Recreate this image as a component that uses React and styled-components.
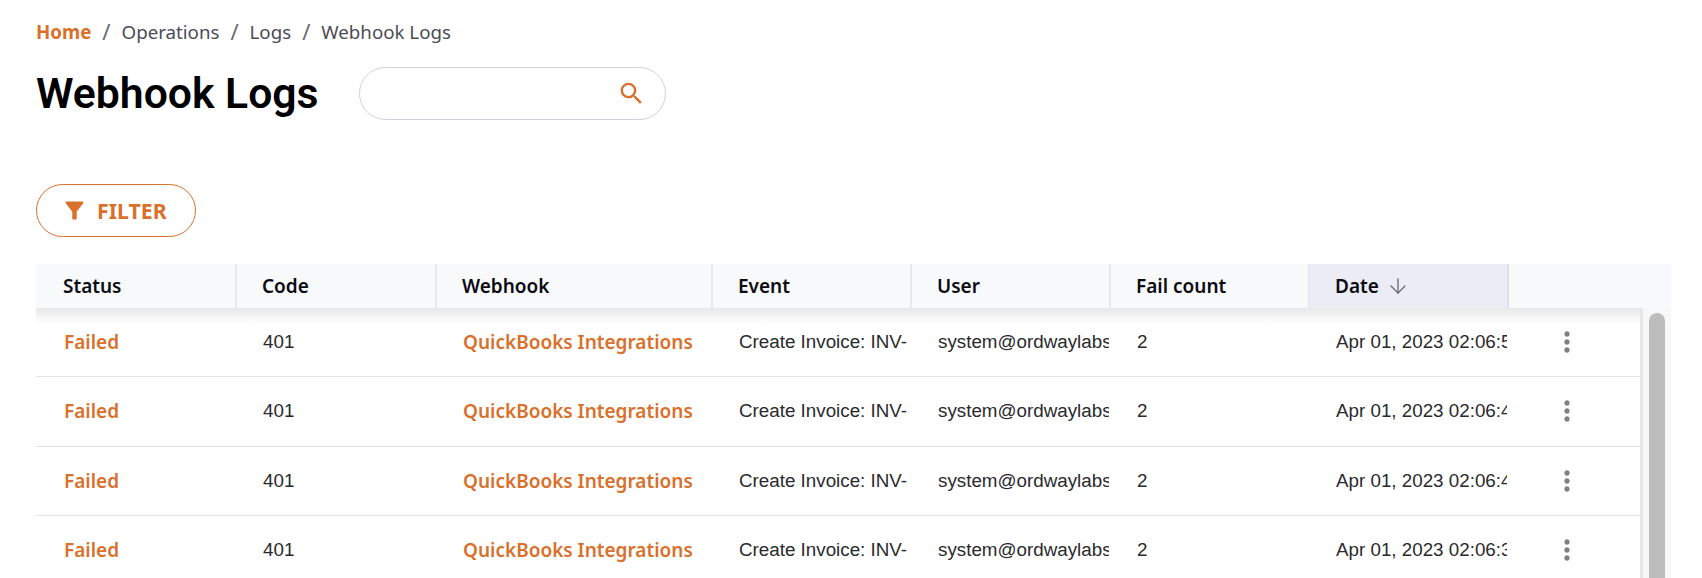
import styled, { createGlobalStyle } from "styled-components";
import { MdSearch, MdFilterAlt, MdMoreVert } from "react-icons/md";
import { ArrowDown } from "lucide-react";

const orange = "#d9702b";

const columns = [
  { label: "Status", width: 201 },
  { label: "Code", width: 200 },
  { label: "Webhook", width: 276 },
  { label: "Event", width: 199 },
  { label: "User", width: 199 },
  { label: "Fail count", width: 199 },
  { label: "Date", width: 199, sorted: true },
];

const logs = [
  "Apr 01, 2023 02:06:52 PM",
  "Apr 01, 2023 02:06:47 PM",
  "Apr 01, 2023 02:06:41 PM",
  "Apr 01, 2023 02:06:33 PM",
];

const Global = createGlobalStyle`
  html, body {
    margin: 0;
    height: 100%;
    background: #fff;
    overflow: hidden;
  }
  * {
    box-sizing: border-box;
  }
`;

const Page = styled.div`
  height: 578px;
  padding: 19px 31px 0 36px;
  overflow: hidden;
  font-family: "Noto Sans", sans-serif;
`;

const Breadcrumbs = styled.nav`
  display: flex;
  align-items: center;
  height: 24px;
  font-size: 18.7px;
  color: #4b4b55;
`;

const Crumb = styled.span`
  color: ${(p) => (p.$home ? orange : "#4b4b55")};
  font-weight: ${(p) => (p.$home ? 700 : 400)};
`;

const Slash = styled.span`
  margin: 0 11px;
  font-size: 22px;
  color: #6a6a72;
`;

const TitleRow = styled.div`
  display: flex;
  align-items: center;
  gap: 40px;
  margin-top: 24px;
`;

const Title = styled.h1`
  margin: 0;
  font-family: Roboto, sans-serif;
  font-size: 42.7px;
  font-weight: 600;
  line-height: 53px;
  color: #000;
`;

const Search = styled.div`
  display: flex;
  align-items: center;
  justify-content: flex-end;
  width: 307px;
  height: 53px;
  padding-right: 19px;
  border: 1px solid #cfd0da;
  border-radius: 27px;
  color: ${orange};
  svg {
    font-size: 29px;
  }
`;

const FilterButton = styled.button`
  display: flex;
  align-items: center;
  gap: 9px;
  width: 160px;
  height: 53px;
  margin-top: 64px;
  padding: 0 0 0 24px;
  border: 1px solid ${orange};
  border-radius: 27px;
  background: #fff;
  color: ${orange};
  font-family: inherit;
  font-size: 21.3px;
  font-weight: 700;
  svg {
    font-size: 27px;
  }
`;

const Table = styled.div`
  margin-top: 27px;
`;

const HeaderRow = styled.div`
  display: flex;
  height: 44px;
  background: #f8f9fb;
`;

const HeaderCell = styled.div`
  display: flex;
  align-items: center;
  gap: 7px;
  width: ${(p) => p.$width}px;
  padding-left: 25px;
  font-size: 19px;
  font-weight: 600;
  color: #0b0b12;
  background: ${(p) => (p.$sorted ? "#ebecf4" : "#f8f9fb")};
  border-right: 2px solid ${(p) => (p.$sorted ? "#dfe0e9" : "#e7e8ee")};
  &:first-child {
    padding-left: 27px;
  }
  svg {
    color: #66666e;
  }
`;

const Body = styled.div`
  display: flex;
  height: 270px;
`;

const Rows = styled.div`
  position: relative;
  flex: 1;
  &::before {
    content: "";
    position: absolute;
    top: 0;
    left: 0;
    right: 0;
    height: 15px;
    background: linear-gradient(rgba(60, 60, 70, 0.12), rgba(60, 60, 70, 0));
  }
`;

const Row = styled.div`
  display: flex;
  align-items: center;
  height: 69.3px;
  border-bottom: 1px solid #e2e2e6;
`;

const Cell = styled.div`
  flex: none;
  width: ${(p) => p.$width}px;
  padding: 0 2px 0 26px;
  overflow: hidden;
  white-space: nowrap;
  font-family: "Liberation Sans", sans-serif;
  font-size: 18.8px;
  color: #2a2a2e;
  &:first-child {
    padding-left: 28px;
  }
`;

const LinkCell = styled(Cell)`
  font-family: "Noto Sans", sans-serif;
  font-weight: 600;
  font-size: 19px;
  color: ${orange};
`;

const ClipText = styled.span`
  display: block;
  overflow: hidden;
`;

const Actions = styled.div`
  display: flex;
  justify-content: center;
  width: 116px;
  color: #808084;
  svg {
    font-size: 32px;
  }
`;

const ScrollTrack = styled.div`
  width: 31px;
  padding: 5px 6px 0 6px;
  border-left: 3px solid #e6e6e8;
  background: #f8f8f8;
`;

const ScrollThumb = styled.div`
  height: 100%;
  border-radius: 8px 8px 0 0;
  background: #bdbdbd;
`;

export default function App() {
  return (
    <Page>
      <Global />
      <Breadcrumbs>
        <Crumb $home>Home</Crumb>
        <Slash>/</Slash>
        <Crumb>Operations</Crumb>
        <Slash>/</Slash>
        <Crumb>Logs</Crumb>
        <Slash>/</Slash>
        <Crumb>Webhook Logs</Crumb>
      </Breadcrumbs>
      <TitleRow>
        <Title>Webhook Logs</Title>
        <Search>
          <MdSearch />
        </Search>
      </TitleRow>
      <FilterButton>
        <MdFilterAlt />
        FILTER
      </FilterButton>
      <Table>
        <HeaderRow>
          {columns.map((col) => (
            <HeaderCell key={col.label} $width={col.width} $sorted={col.sorted}>
              {col.label}
              {col.sorted && <ArrowDown size={24} strokeWidth={1.3} />}
            </HeaderCell>
          ))}
        </HeaderRow>
        <Body>
          <Rows>
            {logs.map((date) => (
              <Row key={date}>
                <LinkCell $width={columns[0].width}>Failed</LinkCell>
                <Cell $width={columns[1].width}>401</Cell>
                <LinkCell $width={columns[2].width}>QuickBooks Integrations</LinkCell>
                <Cell $width={columns[3].width}>Create Invoice: INV-</Cell>
                <Cell $width={columns[4].width}>
                  <ClipText>system@ordwaylabs.com</ClipText>
                </Cell>
                <Cell $width={columns[5].width}>2</Cell>
                <Cell $width={columns[6].width}>
                  <ClipText>{date}</ClipText>
                </Cell>
                <Actions>
                  <MdMoreVert />
                </Actions>
              </Row>
            ))}
          </Rows>
          <ScrollTrack>
            <ScrollThumb />
          </ScrollTrack>
        </Body>
      </Table>
    </Page>
  );
}
